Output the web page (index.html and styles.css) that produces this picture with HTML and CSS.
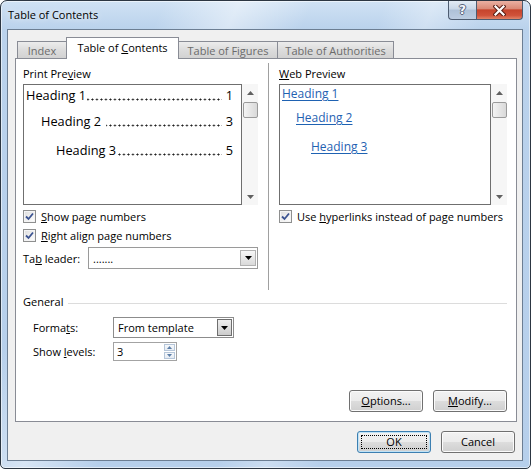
FILE: index.html
```html
<!DOCTYPE html>
<html>
<head>
<meta charset="utf-8">
<title>Table of Contents</title>
<link rel="stylesheet" href="styles.css">
</head>
<body>
<div class="window">
  <div class="titlebar">
    <div class="title">Table of Contents</div>
    <div class="caption">
      <div class="cap cap-help"><span class="help-glyph">?</span></div>
      <div class="cap cap-close">
        <svg width="13" height="11" viewBox="0 0 13 11">
          <path d="M2.5 1.5 L10.5 9.5 M10.5 1.5 L2.5 9.5" stroke="#5a1e14" stroke-width="4.2" stroke-linecap="square" fill="none"/>
          <path d="M2.5 1.5 L10.5 9.5 M10.5 1.5 L2.5 9.5" stroke="#ffffff" stroke-width="2.2" stroke-linecap="square" fill="none"/>
        </svg>
      </div>
    </div>
  </div>

  <div class="client">
    <div class="tabs">
      <div class="tab tab-index"><span>Index</span></div>
      <div class="tab tab-toc active"><span>Table of <u>C</u>ontents</span></div>
      <div class="tab tab-tof"><span>Table of Figures</span></div>
      <div class="tab tab-toa"><span>Table of Authorities</span></div>
    </div>

    <div class="panel">
      <div class="columns">
        <div class="col col-left">
          <div class="grp-label">Print Pre<u>v</u>iew</div>
          <div class="preview">
            <div class="preview-box print-box">
              <div class="toc-line lev1"><span class="toc-text">Heading 1</span><span class="dots"></span><span class="pg">1</span></div>
              <div class="toc-line lev2"><span class="toc-text">Heading 2</span><span class="dots spaced"></span><span class="pg">3</span></div>
              <div class="toc-line lev3"><span class="toc-text">Heading 3</span><span class="dots"></span><span class="pg">5</span></div>
            </div>
            <div class="vscroll">
              <div class="sb-arrow"><svg width="7" height="4" viewBox="0 0 7 4"><path d="M0 4 L3.5 0 L7 4 Z" fill="#606060"/></svg></div>
              <div class="sb-thumb"></div>
              <div class="sb-space"></div>
              <div class="sb-arrow"><svg width="7" height="4" viewBox="0 0 7 4"><path d="M0 0 L7 0 L3.5 4 Z" fill="#606060"/></svg></div>
            </div>
          </div>
          <div class="check-row first">
            <span class="checkbox"><svg width="11" height="11" viewBox="0 0 11 11"><path d="M2 5.5 L4.5 8 L9 2.5" stroke="#3b5391" stroke-width="1.8" fill="none"/></svg></span>
            <span><u>S</u>how page numbers</span>
          </div>
          <div class="check-row">
            <span class="checkbox"><svg width="11" height="11" viewBox="0 0 11 11"><path d="M2 5.5 L4.5 8 L9 2.5" stroke="#3b5391" stroke-width="1.8" fill="none"/></svg></span>
            <span><u>R</u>ight align page numbers</span>
          </div>
          <div class="leader-row">
            <span class="leader-label">Ta<u>b</u> leader:</span>
            <div class="combo combo-leader">
              <span class="combo-text">.......</span>
              <span class="combo-btn"><svg width="7" height="4" viewBox="0 0 7 4"><path d="M0 0 L7 0 L3.5 4 Z" fill="#000"/></svg></span>
            </div>
          </div>
        </div>

        <div class="vsep"></div>

        <div class="col col-right">
          <div class="grp-label"><u>W</u>eb Preview</div>
          <div class="preview">
            <div class="preview-box web-box">
              <div class="web-line wl1"><span class="link">Heading 1</span></div>
              <div class="web-line wl2"><span class="link">Heading 2</span></div>
              <div class="web-line wl3"><span class="link">Heading 3</span></div>
            </div>
            <div class="vscroll">
              <div class="sb-arrow"><svg width="7" height="4" viewBox="0 0 7 4"><path d="M0 4 L3.5 0 L7 4 Z" fill="#606060"/></svg></div>
              <div class="sb-thumb"></div>
              <div class="sb-space"></div>
              <div class="sb-arrow"><svg width="7" height="4" viewBox="0 0 7 4"><path d="M0 0 L7 0 L3.5 4 Z" fill="#606060"/></svg></div>
            </div>
          </div>
          <div class="check-row first">
            <span class="checkbox"><svg width="11" height="11" viewBox="0 0 11 11"><path d="M2 5.5 L4.5 8 L9 2.5" stroke="#3b5391" stroke-width="1.8" fill="none"/></svg></span>
            <span>Use <u>h</u>yperlinks instead of page numbers</span>
          </div>
        </div>
      </div>

      <div class="general">
        <div class="group-head"><span>General</span><span class="hline"></span></div>
        <div class="form-row formats-row">
          <span class="form-label">Forma<u>t</u>s:</span>
          <div class="combo combo-formats">
            <span class="combo-text">From template</span>
            <span class="combo-btn dark"><svg width="7" height="4" viewBox="0 0 7 4"><path d="M0 0 L7 0 L3.5 4 Z" fill="#000"/></svg></span>
          </div>
        </div>
        <div class="form-row levels-row">
          <span class="form-label">Show <u>l</u>evels:</span>
          <div class="spin">
            <span class="spin-text">3</span>
            <span class="spin-btns">
              <span class="spin-btn"><svg width="5" height="3" viewBox="0 0 5 3"><path d="M0 3 L2.5 0 L5 3 Z" fill="#5c7ea8"/></svg></span>
              <span class="spin-btn"><svg width="5" height="3" viewBox="0 0 5 3"><path d="M0 0 L5 0 L2.5 3 Z" fill="#5c7ea8"/></svg></span>
            </span>
          </div>
        </div>
      </div>

      <div class="panel-buttons">
        <button class="btn"><span><u>O</u>ptions...</span></button>
        <button class="btn"><span><u>M</u>odify...</span></button>
      </div>
    </div>

    <div class="dialog-buttons">
      <button class="btn btn-default"><span class="focus">OK</span></button>
      <button class="btn"><span>Cancel</span></button>
    </div>
  </div>
</div>
</body>
</html>
```

FILE: styles.css
```css
* { box-sizing: border-box; }
html, body { margin: 0; padding: 0; }
body {
  width: 531px;
  height: 469px;
  overflow: hidden;
  background: #ffffff;
  font-family: "Open Sans", "Noto Sans", sans-serif;
  font-size: 11px;
  color: #000;
}
u { text-decoration: underline; text-underline-offset: 1px; }

.window {
  width: 531px;
  height: 469px;
  border: 1px solid #2c3642;
  border-radius: 7px 7px 5px 5px;
  background-color: #bcd5ee;
  background-image:
    linear-gradient(115deg, rgba(255,255,255,0) 22%, rgba(255,255,255,0.45) 32%, rgba(255,255,255,0) 42%),
    linear-gradient(110deg, rgba(255,255,255,0) 55%, rgba(255,255,255,0.3) 62%, rgba(255,255,255,0) 70%),
    linear-gradient(180deg, #d0e2f4 0, #bad2ec 28px, #b6cfeb 100%);
  box-shadow: inset 0 0 0 1px rgba(255,255,255,0.55);
  display: flex;
  flex-direction: column;
  overflow: hidden;
}

.titlebar {
  flex: none;
  height: 28px;
  display: flex;
  padding-left: 7px;
}
.title {
  line-height: 28px;
  font-size: 11px;
  color: #000;
  text-shadow: 0 0 6px rgba(255,255,255,0.95);
}
.caption {
  margin-left: auto;
  margin-right: 7px;
  display: flex;
  height: 19px;
}
.cap {
  height: 19px;
  border: 1px solid #4d5c70;
  border-top: none;
  display: flex;
  align-items: center;
  justify-content: center;
}
.cap-help {
  width: 28px;
  border-right: none;
  border-radius: 0 0 0 4px;
  background: linear-gradient(180deg, #e3ebf4 0%, #c9d7e7 45%, #aec1d7 50%, #bccde1 100%);
}
.help-glyph {
  font-family: "DejaVu Sans", sans-serif;
  font-weight: bold;
  font-size: 12px;
  line-height: 12px;
  color: #f6f8fb;
  text-shadow: 1px 0 0 #56627a, -1px 0 0 #56627a, 0 1px 0 #56627a, 0 -1px 0 #56627a;
}
.cap-close {
  width: 47px;
  border-radius: 0 0 4px 0;
  background: linear-gradient(180deg, #eab0a2 0%, #da8a77 42%, #c6442c 50%, #d0523a 80%, #e28468 100%);
}

.client {
  flex: 1;
  margin: 0 7px 7px 6px;
  border: 1px solid #6c7e93;
  background: #f0f0f0;
  padding: 7px 5px 0 7px;
  display: flex;
  flex-direction: column;
}

.tabs {
  display: flex;
  align-items: flex-end;
  height: 21px;
  margin-left: 2px;
  position: relative;
  z-index: 1;
}
.tab {
  height: 17px;
  border: 1px solid #898c95;
  border-bottom: none;
  background: linear-gradient(180deg, #ececec 0%, #dcdcdc 50%, #d2d2d2 100%);
  color: #6b6b6b;
  display: flex;
  align-items: center;
  justify-content: center;
  line-height: 15px;
  margin-left: -1px;
  white-space: nowrap;
}
.tab-index { width: 50px; margin-left: 0; }
.tab-toc { width: 113px; }
.tab-tof { width: 100px; }
.tab-toa { width: 117px; }
.tab.active {
  height: 22px;
  margin-bottom: -1px;
  background: #ffffff;
  color: #000;
  padding-bottom: 3px;
  position: relative;
  z-index: 2;
}

.panel {
  flex: none;
  height: 364px;
  border: 1px solid #898c95;
  background: #ffffff;
  padding: 7px 9px 9px 7px;
  display: flex;
  flex-direction: column;
}

.columns {
  display: grid;
  grid-template-columns: 235px 1px 228px;
  column-gap: 10px;
  height: 224px;
}
.vsep {
  background: #a0a0a0;
  margin-top: -3px;
}
.col { display: flex; flex-direction: column; }

.grp-label {
  height: 16px;
  line-height: 16px;
  margin-bottom: 2px;
}

.preview {
  display: flex;
  height: 121px;
}
.preview-box {
  flex: 1;
  border: 1px solid #6f6f6f;
  background: #ffffff;
  overflow: hidden;
}
.vscroll {
  width: 16px;
  display: flex;
  flex-direction: column;
  align-items: center;
  background: #f6f6f6;
}
.sb-arrow {
  height: 17px;
  display: flex;
  align-items: center;
  justify-content: center;
}
.sb-arrow svg { display: block; }
.sb-thumb {
  width: 15px;
  height: 16px;
  margin-top: 1px;
  margin-left: 1px;
  border: 1px solid #9a9a9a;
  border-radius: 2px;
  background: linear-gradient(90deg, #f4f4f4 0%, #e6e6e6 50%, #d9d9d9 100%);
}
.sb-space { flex: 1; }

.print-box {
  padding: 0 8px 0 0;
  font-size: 12.75px;
}
.toc-line {
  display: flex;
  height: 20px;
  line-height: 20px;
  white-space: nowrap;
}
.toc-line.lev1 { padding-left: 2px; }
.toc-line.lev2 { padding-left: 17px; margin-top: 6px; }
.toc-line.lev3 { padding-left: 32px; margin-top: 9px; }
.dots {
  flex: 1;
  margin-left: 1px;
  background-image: radial-gradient(circle at 50% 50%, #1a1a1a 0, #1a1a1a 0.75px, rgba(0,0,0,0) 1.25px);
  background-size: 4.5px 3px;
  background-repeat: repeat-x;
  background-position: right 1px top 13px;
}
.dots.spaced { margin-left: 5px; }
.pg { padding-left: 4px; }

.web-box { font-size: 12px; }
.web-line {
  height: 18px;
  line-height: 18px;
  white-space: nowrap;
}
.wl1 { padding-left: 2px; }
.wl2 { padding-left: 16px; margin-top: 6px; }
.wl3 { padding-left: 31px; margin-top: 11px; }
.link {
  color: #1f62b2;
  text-decoration: underline;
  text-underline-offset: 2px;
}

.check-row {
  height: 19px;
  display: flex;
  align-items: center;
  white-space: nowrap;
}
.check-row.first { margin-top: 2px; }
.checkbox {
  width: 13px;
  height: 13px;
  margin-right: 5px;
  border: 1px solid #8e8f8f;
  background: linear-gradient(135deg, #dcdcdc 0%, #f2f2f2 60%, #ffffff 100%);
  box-shadow: inset 0 0 0 1px #f4f4f4;
  display: flex;
  align-items: center;
  justify-content: center;
  flex: none;
}
.checkbox svg { display: block; }

.leader-row {
  display: flex;
  align-items: center;
  margin-top: 2px;
  height: 22px;
}
.leader-label { width: 65px; }

.combo {
  display: flex;
  align-items: stretch;
  border: 1px solid #9a9a9a;
  background: #ffffff;
}
.combo-text {
  flex: 1;
  padding-left: 4px;
  display: flex;
  align-items: center;
  white-space: nowrap;
}
.combo-btn {
  width: 16px;
  border: 1px solid #b2b2b2;
  background: linear-gradient(180deg, #f7f7f7 0%, #e8e8e8 50%, #dadada 100%);
  display: flex;
  align-items: center;
  justify-content: center;
}
.combo-btn svg { display: block; }
.combo-leader {
  width: 170px;
  height: 22px;
  padding: 2px 1px 2px 0;
}
.combo-formats {
  width: 121px;
  height: 21px;
  padding: 1px;
  border-color: #8c8c8c;
}
.combo-formats .combo-text { padding-left: 3px; }
.combo-btn.dark {
  width: 15px;
  border-color: #6e6e6e;
  background: linear-gradient(180deg, #eeeeee 0%, #dedede 50%, #cccccc 100%);
}

.general {
  margin-top: 4px;
  display: flex;
  flex-direction: column;
}
.group-head {
  height: 16px;
  display: flex;
  align-items: center;
  line-height: 16px;
}
.hline {
  flex: 1;
  height: 1px;
  margin-left: 5px;
  margin-top: 2px;
  background: #dcdcdc;
}
.form-row {
  display: flex;
  align-items: center;
  margin-left: 10px;
}
.form-label { width: 80px; }
.formats-row { margin-top: 7px; height: 21px; }
.levels-row { margin-top: 4px; height: 19px; }

.spin {
  width: 64px;
  height: 19px;
  border: 1px solid #a3a3a3;
  background: #ffffff;
  display: flex;
}
.spin-text {
  flex: 1;
  padding-left: 3px;
  display: flex;
  align-items: center;
}
.spin-btns {
  width: 12px;
  display: flex;
  flex-direction: column;
  padding: 1px 1px 1px 0;
  gap: 1px;
}
.spin-btn {
  flex: 1;
  border: 1px solid #b6c6d9;
  background: linear-gradient(180deg, #f6f8fb 0%, #e6ecf3 100%);
  display: flex;
  align-items: center;
  justify-content: center;
}
.spin-btn svg { display: block; }

.panel-buttons {
  margin-top: auto;
  display: flex;
  justify-content: flex-end;
  gap: 10px;
}
.dialog-buttons {
  margin-top: 9px;
  margin-right: 2px;
  display: flex;
  justify-content: flex-end;
  gap: 10px;
}

.btn {
  width: 74px;
  height: 22px;
  padding: 0;
  margin: 0;
  font-family: "Open Sans", "Noto Sans", sans-serif;
  font-size: 11px;
  color: #000;
  border: 1px solid #707070;
  border-radius: 3px;
  background: linear-gradient(180deg, #f2f2f2 0%, #ebebeb 50%, #dddddd 50%, #cfcfcf 100%);
  box-shadow: inset 0 0 0 1px #fbfbfb;
  display: flex;
  align-items: center;
  justify-content: center;
  line-height: 14px;
}
.btn-default {
  border-color: #3c7fb1;
  box-shadow: inset 0 0 0 1px #bfe3f7;
  padding: 3px;
}
.focus {
  flex: 1;
  align-self: stretch;
  border: 1px dotted #000;
  display: flex;
  align-items: center;
  justify-content: center;
}
```
